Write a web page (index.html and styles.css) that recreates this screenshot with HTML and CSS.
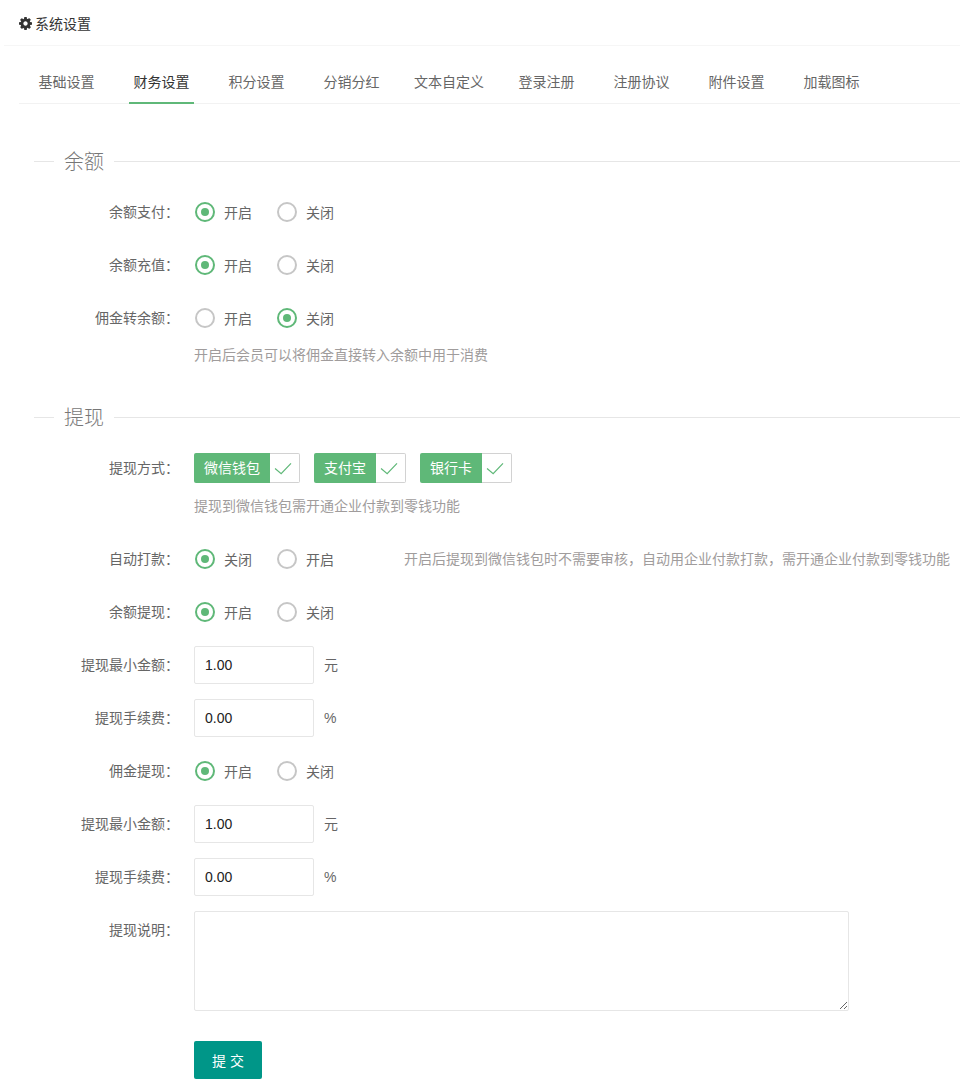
FILE: index.html
```html
<!DOCTYPE html>
<html lang="zh-CN">
<head>
<meta charset="utf-8">
<title>系统设置</title>
<link rel="stylesheet" href="styles.css">
</head>
<body>
<header class="page-head">
  <svg class="gear" viewBox="0 0 1536 1536"><path d="M1024 768q0-106-75-181t-181-75-181 75-75 181 75 181 181 75 181-75 75-181zm512-109v222q0 12-8 23t-20 13l-185 28q-19 54-39 91 35 50 107 138 10 12 10 25t-9 23q-27 37-99 108t-94 71q-12 0-26-9l-138-108q-44 23-91 38-16 136-29 186-7 28-36 28h-222q-14 0-24.500-8.500t-11.500-21.500l-28-184q-49-16-90-37l-141 107q-10 9-25 9-14 0-25-11-126-114-165-168-7-10-7-23 0-12 8-23 15-21 51-66.500t54-70.500q-27-50-41-99l-183-27q-13-2-21-12.500t-8-23.500v-222q0-12 8-23t19-13l186-28q14-46 39-92-40-57-107-138-10-12-10-24 0-10 9-23 26-36 98.500-107.500t94.500-71.500q13 0 26 10l138 107q44-23 91-38 16-136 29-186 7-28 36-28h222q14 0 24.500 8.500t11.500 21.500l28 184q49 16 90 37l142-107q9-9 24-9 13 0 25 10 129 119 165 170 7 8 7 22 0 12-8 23-15 21-51 66.500t-54 70.500q26 50 41 98l183 28q13 2 21 12.500t8 23.500z"/></svg>
  <span>系统设置</span>
</header>
<ul class="tabs">
  <li>基础设置</li>
  <li class="active">财务设置</li>
  <li>积分设置</li>
  <li>分销分红</li>
  <li>文本自定义</li>
  <li>登录注册</li>
  <li>注册协议</li>
  <li>附件设置</li>
  <li>加载图标</li>
</ul>
<form class="settings">
  <div class="legend"><span>余额</span></div>
  <div class="row"><label class="lbl">余额支付：</label><div class="radios"><span class="radio on"><i></i>开启</span><span class="radio"><i></i>关闭</span></div></div>
  <div class="row"><label class="lbl">余额充值：</label><div class="radios"><span class="radio on"><i></i>开启</span><span class="radio"><i></i>关闭</span></div></div>
  <div class="row tight"><label class="lbl">佣金转余额：</label><div class="radios"><span class="radio"><i></i>开启</span><span class="radio on"><i></i>关闭</span></div></div>
  <div class="row tight first-aux"><span class="lbl"></span><span class="aux">开启后会员可以将佣金直接转入余额中用于消费</span></div>

  <div class="legend second"><span>提现</span></div>
  <div class="row tight"><label class="lbl">提现方式：</label>
    <div class="checks">
      <span class="check"><b>微信钱包</b><i><svg viewBox="0 0 20 16"><path d="M1 8l6.500 5.500L18 2.500"/></svg></i></span>
      <span class="check"><b>支付宝</b><i><svg viewBox="0 0 20 16"><path d="M1 8l6.500 5.500L18 2.500"/></svg></i></span>
      <span class="check"><b>银行卡</b><i><svg viewBox="0 0 20 16"><path d="M1 8l6.500 5.500L18 2.500"/></svg></i></span>
    </div>
  </div>
  <div class="row"><span class="lbl"></span><span class="aux">提现到微信钱包需开通企业付款到零钱功能</span></div>
  <div class="row"><label class="lbl">自动打款：</label><div class="radios wide"><span class="radio on"><i></i>关闭</span><span class="radio"><i></i>开启</span></div><span class="aux">开启后提现到微信钱包时不需要审核，自动用企业付款打款，需开通企业付款到零钱功能</span></div>
  <div class="row"><label class="lbl">余额提现：</label><div class="radios"><span class="radio on"><i></i>开启</span><span class="radio"><i></i>关闭</span></div></div>
  <div class="row"><label class="lbl">提现最小金额：</label><input class="field" type="text" value="1.00"><span class="unit">元</span></div>
  <div class="row"><label class="lbl">提现手续费：</label><input class="field" type="text" value="0.00"><span class="unit">%</span></div>
  <div class="row"><label class="lbl">佣金提现：</label><div class="radios"><span class="radio on"><i></i>开启</span><span class="radio"><i></i>关闭</span></div></div>
  <div class="row"><label class="lbl">提现最小金额：</label><input class="field" type="text" value="1.00"><span class="unit">元</span></div>
  <div class="row"><label class="lbl">提现手续费：</label><input class="field" type="text" value="0.00"><span class="unit">%</span></div>
  <div class="row area-row"><label class="lbl">提现说明：</label><textarea class="area"></textarea></div>
  <div class="row"><span class="lbl"></span><button class="submit" type="button">提 交</button></div>
</form>
</body>
</html>
```
FILE: styles.css
```css
* { box-sizing: border-box; }
html, body { margin: 0; padding: 0; }
body {
  width: 960px;
  overflow-x: hidden;
  background: #fff;
  color: #666;
  font: 14px/20px "Liberation Sans", "Noto Sans CJK SC", sans-serif;
}
.page-head {
  height: 46px;
  margin-left: 4px;
  padding: 2px 0 0 15px;
  display: flex;
  align-items: center;
  gap: 3px;
  color: #333;
  border-bottom: 1px solid #f6f6f6;
}
.gear { width: 13px; height: 13px; fill: #333; }
.tabs {
  list-style: none;
  margin: 14px 0 0 19px;
  padding: 0 0 0 15px;
  display: flex;
  gap: 30px;
  height: 44px;
  border-bottom: 1px solid #f2f2f2;
}
.tabs li {
  min-width: 65px;
  height: 44px;
  line-height: 44px;
  text-align: center;
  white-space: nowrap;
}
.tabs .active { color: #333; border-bottom: 2px solid #5fb878; }
.settings { margin-top: 43px; }
.legend {
  display: flex;
  align-items: center;
  height: 28px;
  margin: 0 0 18px 34px;
  font-size: 20px;
  font-weight: 300;
  color: #777;
}
.legend::before { content: ""; width: 20px; height: 1px; background: #e6e6e6; }
.legend::after { content: ""; flex: 1; height: 1px; background: #e6e6e6; }
.legend span { padding: 2px 10px 0; }
.legend.second { margin-top: 29px; }
.row {
  display: flex;
  align-items: center;
  min-height: 38px;
  margin-bottom: 15px;
}
.row.tight { margin-bottom: 0; }
.row.first-aux { margin-top: -1px; }
.row.area-row { align-items: flex-start; }
.lbl {
  flex: none;
  width: 194px;
  padding-right: 15px;
  text-align: right;
  white-space: nowrap;
}
.area-row .lbl { padding-top: 9px; }
.radios { display: flex; gap: 25px; }
.radios.wide { width: 210px; }
.radio {
  display: flex;
  align-items: center;
  gap: 9px;
  width: 57px;
  padding-top: 2px;
  white-space: nowrap;
  margin-left: 1px;
}
.radio + .radio { margin-left: 0; }
.radio i {
  flex: none;
  width: 20px;
  height: 20px;
  margin-top: -2px;
  border: 2px solid #c6c6c6;
  border-radius: 50%;
  position: relative;
}
.radio.on i { border-color: #5fb878; }
.radio.on i::after {
  content: "";
  position: absolute;
  top: 4px;
  left: 4px;
  width: 8px;
  height: 8px;
  border-radius: 50%;
  background: #5fb878;
}
.aux { color: #a09c9c; white-space: nowrap; }
.checks { display: flex; gap: 14px; }
.check { display: flex; height: 30px; }
.check b {
  padding: 0 10px;
  line-height: 30px;
  font-weight: 400;
  color: #fff;
  background: #5fb878;
  border-radius: 2px 0 0 2px;
}
.check i {
  width: 30px;
  height: 30px;
  display: flex;
  align-items: center;
  justify-content: center;
  border: 1px solid #d2d2d2;
  border-left: 0;
  border-radius: 0 2px 2px 0;
}
.check svg { width: 19px; height: 15px; margin-right: 2px; fill: none; stroke: #5fb878; stroke-width: 1.3; }
.field {
  width: 120px;
  height: 38px;
  padding: 0 10px;
  border: 1px solid #e6e6e6;
  border-radius: 2px;
  outline: 0;
  color: #222;
  font: 14px "Liberation Sans", sans-serif;
}
.unit { margin-left: 10px; }
.area {
  display: block;
  width: 655px;
  height: 100px;
  margin: 0;
  border: 1px solid #e6e6e6;
  border-radius: 2px;
  outline: 0;
}
.area-row { margin-bottom: 30px; }
.submit {
  width: 68px;
  height: 38px;
  padding: 0;
  border: 0;
  border-radius: 2px;
  background: #009688;
  color: #fff;
  font: 14px "Liberation Sans", "Noto Sans CJK SC", sans-serif;
}
```
